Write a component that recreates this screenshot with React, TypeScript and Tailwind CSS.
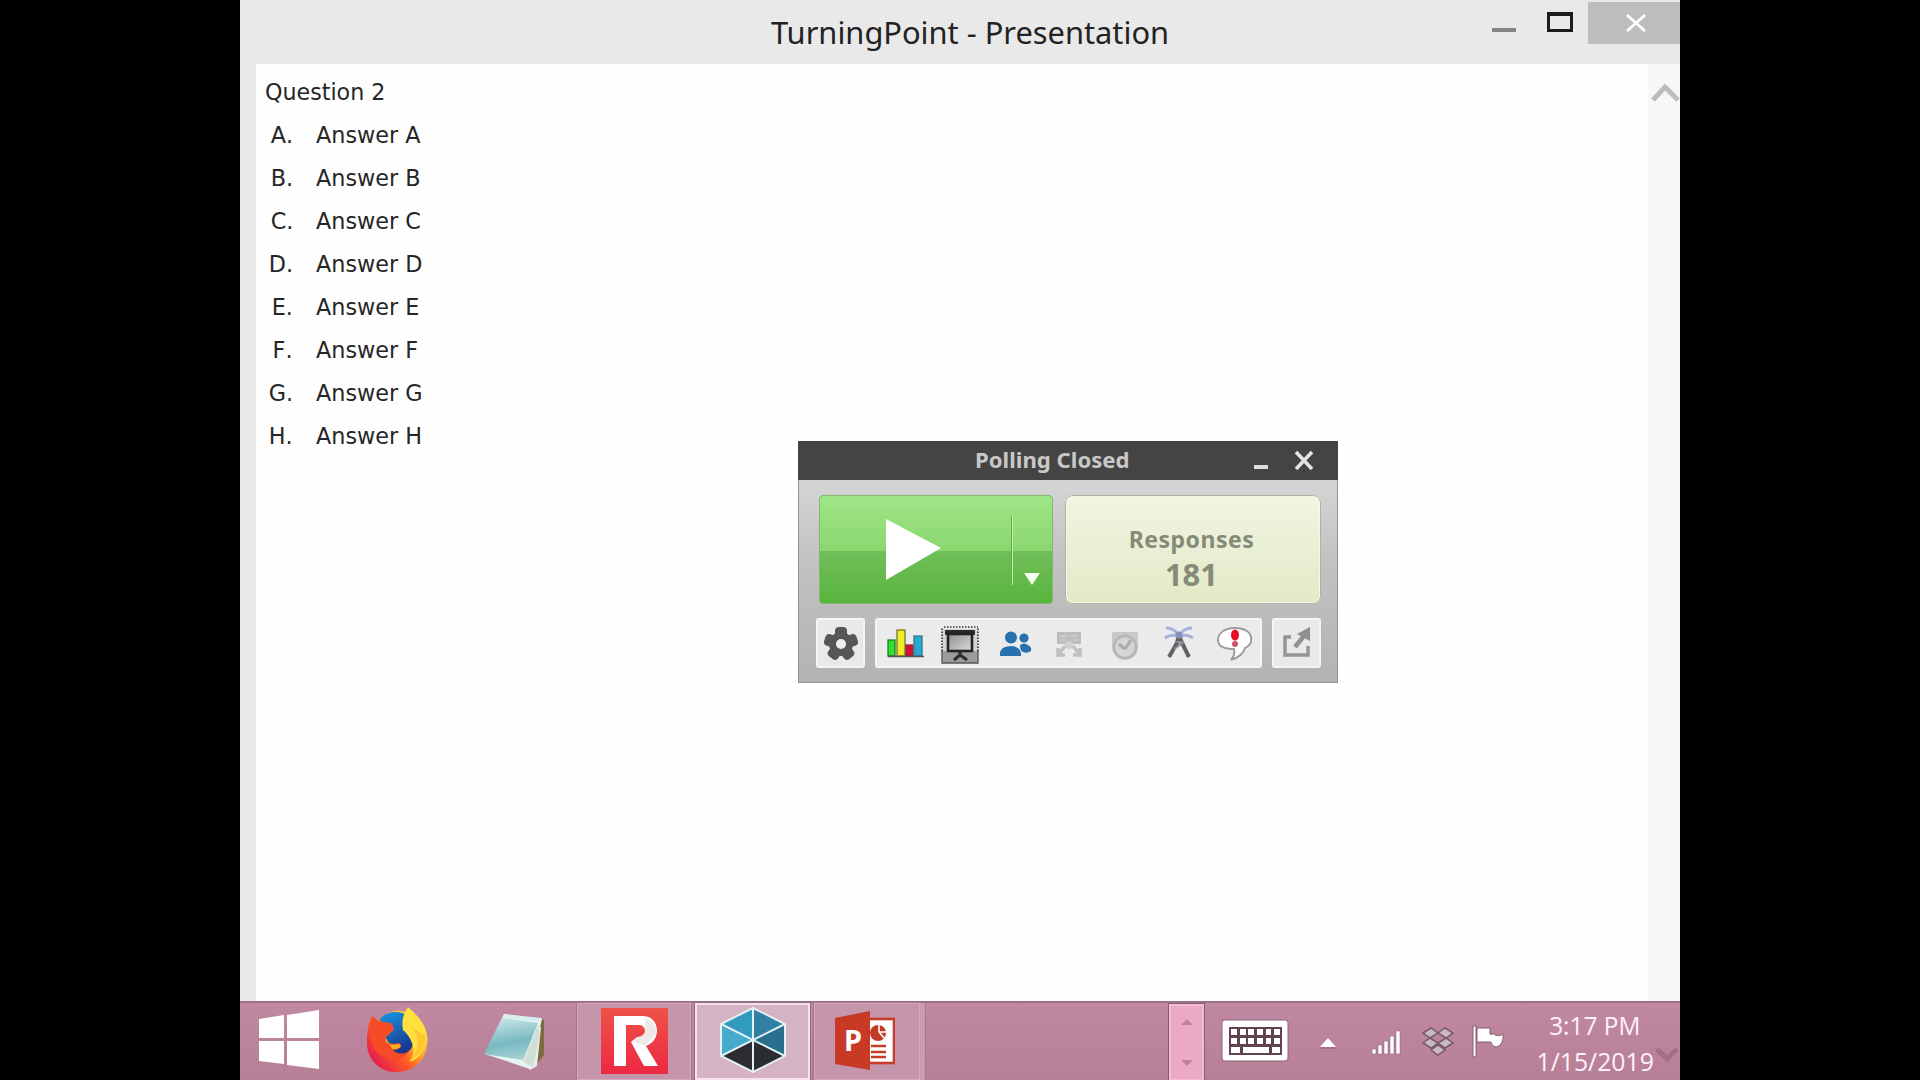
import React from 'react';

const answers = ['A', 'B', 'C', 'D', 'E', 'F', 'G', 'H'];

function TitleBar() {
  return (
    <header className="flex h-16 shrink-0 items-start bg-[#e9e9e9]">
      <h1 className="ml-[531px] mt-[12px] w-[721px] shrink-0 whitespace-nowrap font-['Noto_Sans'] text-[30px] leading-[42px] text-[#222]">
        <span className="inline-block origin-left scale-x-[1.027]">TurningPoint - Presentation</span>
      </h1>
      <div className="mr-[31px] mt-[28px] h-1 w-6 shrink-0 bg-[#858585]" />
      <div className="mr-[15px] mt-[12px] h-5 w-[26px] shrink-0 border-[3px] border-t-4 border-[#1b1b1b]" />
      <div className="mt-[2px] flex h-[42px] w-[92px] shrink-0 items-center bg-[#bdbdbd] pl-[38px]">
        <svg width="20" height="18" viewBox="0 0 20 18">
          <path d="M1 1L19 17M19 1L1 17" stroke="#fff" strokeWidth="2.8" />
        </svg>
      </div>
    </header>
  );
}

function Slide() {
  return (
    <main className="flex h-[937px] shrink-0">
      <div className="w-4 bg-[#e8e8e8]" />
      <section className="flex-1 bg-[#fefefe] pt-[7px] font-['DejaVu_Sans'] text-[23px] text-[#262626] [font-kerning:none]">
        <h2 className="ml-[9px] h-[43px] leading-[43px]">
          <span className="inline-block origin-left scale-x-[0.965]">Question 2</span>
        </h2>
        <ol>
          {answers.map((a) => (
            <li key={a} className="flex h-[43px] leading-[43px]">
              <span className="w-[37px] text-right">
                <span className="inline-block origin-right scale-x-[0.97]">{a}.</span>
              </span>
              <span className="ml-[23px] inline-block origin-left scale-x-[0.97]">Answer {a}</span>
            </li>
          ))}
        </ol>
      </section>
      <aside className="w-8 bg-[#f7f7f7] pl-[3px] pt-[18px]">
        <svg width="29" height="22" viewBox="0 0 29 22">
          <path d="M2 18L14 5L27 18" fill="none" stroke="#bcbcbc" strokeWidth="5" />
        </svg>
      </aside>
    </main>
  );
}

function GearIcon() {
  return (
    <svg width="34" height="34" viewBox="0 0 34 34">
      <g fill="#565656">
        <circle cx="17" cy="18" r="12" />
        <rect x="11" y="1" width="12" height="10" rx="4" />
        <rect x="11" y="1" width="12" height="10" rx="4" transform="rotate(72 17 18)" />
        <rect x="11" y="1" width="12" height="10" rx="4" transform="rotate(144 17 18)" />
        <rect x="11" y="1" width="12" height="10" rx="4" transform="rotate(216 17 18)" />
        <rect x="11" y="1" width="12" height="10" rx="4" transform="rotate(288 17 18)" />
      </g>
      <circle cx="17" cy="18" r="5" fill="#eee" />
    </svg>
  );
}

function ChartIcon() {
  return (
    <svg width="38" height="30" viewBox="0 0 38 30">
      <g strokeWidth="1.3">
        <rect x="1" y="12" width="7" height="16" fill="#2ee12e" stroke="#247a24" />
        <rect x="10" y="2" width="8" height="26" fill="#f0ec25" stroke="#77782c" />
        <rect x="19" y="17" width="7" height="11" fill="#d60f37" stroke="#96233c" />
        <rect x="27" y="8" width="8" height="20" fill="#24abd6" stroke="#3d7683" />
      </g>
      <path d="M1 28.5H37" stroke="#555" strokeWidth="1.5" />
    </svg>
  );
}

function ScreenIcon() {
  return (
    <svg width="40" height="40" viewBox="0 0 40 40">
      <defs>
        <linearGradient id="screen" x1="0" y1="0" x2="1" y2="1">
          <stop stopColor="#8f8f8f" />
          <stop offset="1" stopColor="#ddd" />
        </linearGradient>
      </defs>
      <rect x="2" y="4" width="36" height="34" fill="#d4d4d4" />
      <rect x="2" y="26" width="36" height="12" fill="#9b9b9b" />
      <path d="M2 26V3M38 26V3M4 2H38" fill="none" stroke="#333" strokeWidth="1.6" strokeDasharray="1.5 1.5" />
      <path d="M2 26V38H38V26" fill="none" stroke="#555" strokeWidth="1.3" />
      <rect x="5" y="5" width="30" height="5" rx="1" fill="#292929" />
      <rect x="8" y="9" width="24" height="17" fill="url(#screen)" stroke="#222" strokeWidth="2.6" />
      <path d="M20 26V31M14 35L20 30L27 35" fill="none" stroke="#2b2b2b" strokeWidth="3" />
    </svg>
  );
}

function PeopleIcon() {
  return (
    <svg width="32" height="27" viewBox="0 0 32 27" fill="#2870ae">
      <circle cx="24" cy="7" r="4.6" />
      <path d="M20 14Q24 11 28 14Q32 16 31 20Q27 23 23 21Q20 20 20 14Z" />
      <circle cx="11" cy="6.5" r="6" />
      <path d="M0 25V21Q2 15 11 15Q19 15 21 22V25Z" />
    </svg>
  );
}

function ShuffleIcon() {
  return (
    <svg width="26" height="26" viewBox="0 0 26 26">
      <rect x="1" y="1" width="24" height="12" fill="#bdbdbd" />
      <path d="M4 5H11M15 5H22M4 9H9M17 9H22" stroke="#d0d0d0" strokeWidth="1.6" />
      <circle cx="13" cy="14" r="4" fill="#d2d2d2" />
      <path d="M2 24L9 15M24 24L17 15M2 17V24H9M24 17V24H17" fill="none" stroke="#bfbfbf" strokeWidth="3.4" />
    </svg>
  );
}

function ClockIcon() {
  return (
    <svg width="28" height="30" viewBox="0 0 28 30">
      <path d="M1 1H27V16A13 13 0 0 1 1 16Z" fill="#c9c9c9" />
      <circle cx="14" cy="16" r="11" fill="#d5d5d5" stroke="#b5b5b5" strokeWidth="2.4" />
      <path d="M14 18L20 9M14 18L8 13" stroke="#ababab" strokeWidth="3" />
    </svg>
  );
}

function AntennaIcon() {
  return (
    <svg width="30" height="34" viewBox="0 0 30 34" fill="none">
      <path d="M2 3Q9 3 13 8M28 3Q21 3 17 8M1 13Q7 9 13 11M29 13Q23 9 17 11" stroke="#a9b0dc" strokeWidth="3" />
      <path d="M15 10L13 18L5 32M15 10L18 18L25 32" stroke="#5e6063" strokeWidth="4" />
      <path d="M10 24L20 17M12 17H19" stroke="#898c94" strokeWidth="2" />
      <circle cx="15" cy="10" r="3.5" fill="#8790b6" />
    </svg>
  );
}

function AlertIcon() {
  return (
    <svg width="36" height="36" viewBox="0 0 36 36">
      <path
        d="M18 2C8 2 1 7 1 14C1 20 6 23 17 23C18 28 17 31 14 34C23 31 27 26 28 22C32 20 35 17 34 12C34 6 27 2 18 2Z"
        fill="#fff"
        stroke="#999"
        strokeWidth="1.8"
      />
      <ellipse cx="18" cy="9" rx="4" ry="5.5" fill="#e90c25" />
      <circle cx="18" cy="18" r="3" fill="#cb5369" />
    </svg>
  );
}

function ExportIcon() {
  return (
    <svg width="30" height="32" viewBox="0 0 30 32">
      <path d="M9 11H3V29H26V20" fill="none" stroke="#949494" strokeWidth="3.4" />
      <path d="M13 21L22 10" stroke="#909090" strokeWidth="4.5" />
      <path d="M15 8L28 1V15Z" fill="#909090" />
    </svg>
  );
}

function PollingWindow() {
  return (
    <div className="absolute left-[798px] top-[441px] flex h-[242px] w-[540px] flex-col border border-[#929292] bg-gradient-to-b from-[#dedede] via-[#c2c2c2] to-[#b3b3b3]">
      <div className="-mx-px -mt-px flex h-[39px] shrink-0 items-start bg-[#444]">
        <div className="ml-[177px] mt-[1px] w-[160px] whitespace-nowrap font-['Noto_Sans'] text-[21.5px] font-bold leading-9 text-[#c8c8c8]">
          <span className="inline-block origin-left scale-x-[1.03]">Polling Closed</span>
        </div>
        <div className="ml-[119px] mt-6 h-[4px] w-[14px] bg-[#ddd]" />
        <svg className="ml-[26px] mt-[10px]" width="20" height="19" viewBox="0 0 20 19">
          <path d="M2 1L18 18M18 1L2 18" stroke="#e4e4e4" strokeWidth="3.6" />
        </svg>
      </div>
      <div className="mt-[15px] flex h-[109px] gap-[12px] pl-[20px]">
        <div className="flex w-[234px] flex-col overflow-hidden rounded-[4px] border border-[#83b96f] bg-[linear-gradient(#9fe587_0%,#8bd76f_51%,#70be59_52%,#58b43c_100%)]">
          <div className="flex h-full">
            <svg className="ml-[66px] mt-[22px] shrink-0" width="57" height="64" viewBox="0 0 57 64">
              <path d="M0 1L55 30L0 62Z" fill="#fff" />
            </svg>
            <div className="ml-[68px] mt-5 h-[69px] w-[2px] shrink-0 border-l border-[#5eae47] bg-[#c4efb4]" />
            <svg className="ml-[11px] mt-[77px] shrink-0" width="17" height="14" viewBox="0 0 17 14">
              <path d="M0 0H16L8 12Z" fill="#f1ffec" />
            </svg>
          </div>
        </div>
        <div className="flex w-[256px] flex-col items-center rounded-[8px] border-2 border-[#f5f8e9] bg-gradient-to-b from-[#f1f5e2] to-[#e2eac6] pr-[3px] pt-[25px] font-['Noto_Sans'] font-bold text-[#858a79] outline outline-1 -outline-offset-1 outline-[#afb3a0]">
          <div className="text-[23px] leading-[34px] tracking-[0.5px]">Responses</div>
          <div className="text-[31px] leading-[37px]">181</div>
        </div>
      </div>
      <div className="mt-[14px] flex h-[50px] pl-[17px]">
        <div className="flex w-[49px] items-center justify-center rounded-[3px] border-2 border-[#f5f5f5] bg-[#e9e9e9]">
          <GearIcon />
        </div>
        <div className="ml-[10px] flex w-[387px] items-start rounded-[3px] border-2 border-[#f5f5f5] bg-[#ebebeb]">
          <div className="ml-[10px] mt-[8px]"><ChartIcon /></div>
          <div className="ml-[15px] mt-[5px]"><ScreenIcon /></div>
          <div className="ml-[20px] mt-[11px]"><PeopleIcon /></div>
          <div className="ml-[24px] mt-[11px]"><ShuffleIcon /></div>
          <div className="ml-[29px] mt-[11px]"><ClockIcon /></div>
          <div className="ml-[25px] mt-[5px]"><AntennaIcon /></div>
          <div className="ml-[23px] mt-[6px]"><AlertIcon /></div>
        </div>
        <div className="ml-[10px] flex w-[49px] items-start justify-center rounded-[3px] border-2 border-[#f5f5f5] bg-[#e9e9e9] pt-[6px]">
          <ExportIcon />
        </div>
      </div>
    </div>
  );
}

function WindowsLogo() {
  return (
    <svg width="62" height="62" viewBox="0 0 62 62" fill="#fff">
      <path d="M1 10L26 6V29H1ZM29 6L61 1V29H29ZM1 32H26V55L1 52ZM29 32H61V60L29 56Z" />
    </svg>
  );
}

function FirefoxIcon() {
  return (
    <svg width="62" height="66" viewBox="0 0 62 66">
      <defs>
        <linearGradient id="fox" x1="0.95" y1="0.15" x2="0.15" y2="0.85">
          <stop stopColor="#fff04a" />
          <stop offset="0.35" stopColor="#ffb526" />
          <stop offset="0.65" stopColor="#ff5a25" />
          <stop offset="1" stopColor="#e5214b" />
        </linearGradient>
        <linearGradient id="globe" x1="0" y1="0" x2="0.4" y2="1">
          <stop stopColor="#159ae5" />
          <stop offset="1" stopColor="#1b368c" />
        </linearGradient>
      </defs>
      <path d="M6 9L11 15C21 2 34 2 42 6V1C54 9 64 24 61 38C59 55 46 65 30 65C13 65 1 52 1 36C1 25 2 18 6 9Z" fill="url(#fox)" />
      <path d="M14 12C20 4 34 3 40 8L48 24C51 40 41 49 32 48C25 48 20 43 20 36L17 22Z" fill="url(#globe)" />
      <path d="M7 9L13 15C19 14 24 17 26 16L28 23L20 30C18 35 25 38 33 36C37 38 34 43 27 43C30 47 38 48 43 44C36 58 12 54 6 37C3 28 3 17 7 9Z" fill="#f64b27" />
      <path d="M20 31C17 36 25 39 33 37C37 39 34 43 26 42Z" fill="#ffad25" />
      <path d="M42 0C49 6 60 18 60 32C59 43 53 52 44 55C51 43 46 31 37 23C35 13 38 6 42 0Z" fill="#ffe03c" />
      <path d="M45 20C56 32 52 45 43 54C54 49 60 40 59 29Z" fill="#ffc52f" />
    </svg>
  );
}

function NotepadIcon() {
  return (
    <svg width="62" height="62" viewBox="0 0 62 62">
      <defs>
        <linearGradient id="note" x1="0.3" y1="0" x2="0.5" y2="1">
          <stop stopColor="#c7e5e7" />
          <stop offset="0.6" stopColor="#79b9c1" />
          <stop offset="1" stopColor="#a4d0d3" />
        </linearGradient>
      </defs>
      <path d="M56 8L60 10V45L49 59Z" fill="#7d6a3f" />
      <path d="M55 15L57 18L53 56L46 60L36 49Z" fill="#e4efea" />
      <path d="M20 4L58 9L46 59L1 44Z" fill="#e5f3f2" />
      <path d="M18 8L54 13L39 50L0 44Z" fill="url(#note)" />
      <path d="M20 4L58 8L57 12L19 8Z" fill="#d8eeee" />
      <path d="M54 15L39 52L49 57L56 24Z" fill="#d2dfd6" />
    </svg>
  );
}

function RIcon() {
  return (
    <svg width="67" height="66" viewBox="0 0 67 66">
      <defs>
        <linearGradient id="red" x1="0" y1="0" x2="0" y2="1">
          <stop stopColor="#ef5147" />
          <stop offset="1" stopColor="#ed2943" />
        </linearGradient>
      </defs>
      <rect width="67" height="66" fill="url(#red)" />
      <path d="M13 58V8H42C50 8 56 14 56 23C56 30 51 36 45 38L57 58H43L30 34L36 29C41 29 44 27 44 23C44 20 42 17 38 17H25V58Z" fill="#fff" />
      <path d="M44 10Q56 15 55 26L44 38L31 33L37 29Q45 28 44 20Z" fill="#eee8e8" />
    </svg>
  );
}

function CubeIcon() {
  return (
    <svg width="66" height="66" viewBox="0 0 66 66">
      <path d="M33 1L65 17V49L33 65L1 49V17Z" fill="#2c2d32" />
      <path d="M33 2V33L2 17Z" fill="#3299bf" />
      <path d="M33 2V33L64 17Z" fill="#317fa2" />
      <path d="M2 17L33 33L2 49Z" fill="#45aacd" />
      <path d="M64 17L33 33L64 49Z" fill="#286e8d" />
      <path d="M33 1L65 17V49L33 65L1 49V17ZM33 1V65M1 17L65 49M65 17L1 49" fill="none" stroke="#e6f1f5" strokeWidth="2" />
    </svg>
  );
}

function PowerPointIcon() {
  return (
    <svg width="60" height="60" viewBox="0 0 60 60">
      <rect x="31" y="8" width="28" height="44" fill="#fff" stroke="#c63c28" strokeWidth="2.6" />
      <circle cx="43" cy="22" r="8" fill="#c13b29" />
      <path d="M44 21V13M44 21H52M44 21L49 27" stroke="#fff" strokeWidth="1.6" />
      <path d="M36 35H51M36 41H51M36 46H51" stroke="#c63c28" strokeWidth="2.3" />
      <path d="M0 7L35 0V59L0 53Z" fill="#c83a26" />
      <text x="9" y="40" fontFamily="Noto Sans" fontWeight="700" fontSize="29" fill="#fff">P</text>
    </svg>
  );
}

function Tray() {
  return (
    <div className="flex items-start">
      <div className="mt-px flex h-[77px] w-[35px] flex-col items-center justify-between border-2 border-[#f3bdd0] bg-[#eca9c3] py-[13px] outline outline-1 outline-[#865c70]">
        <svg width="12" height="6" viewBox="0 0 12 6"><path d="M0 6L6 0L12 6Z" fill="#bd819b" /></svg>
        <svg width="12" height="6" viewBox="0 0 12 6"><path d="M0 0L6 6L12 0Z" fill="#bd819b" /></svg>
      </div>
      <svg className="ml-[17px] mt-[16px]" width="68" height="44" viewBox="0 0 68 44">
        <rect x="1" y="1" width="66" height="41" rx="3" fill="#fff" stroke="#8e6779" />
        <rect x="8" y="8" width="53" height="28" fill="#634252" />
        <g fill="#fff">
          <path d="M10 10h6v6h-6zM19 10h6v6h-6zM27 10h6v6h-6zM36 10h6v6h-6zM45 10h5v6h-5zM53 10h6v6h-6z" />
          <path d="M10 19h6v6h-6zM19 19h6v6h-6zM27 19h6v6h-6zM36 19h6v6h-6zM45 19h5v6h-5zM53 19h6v6h-6z" />
          <path d="M10 28h9v6h-9zM22 28h26v6h-26zM51 28h8v6h-8z" />
        </g>
      </svg>
      <svg className="ml-[31px] mt-[35px]" width="16" height="11" viewBox="0 0 16 11">
        <path d="M0 9L8 0L16 9Z" fill="#fff" />
        <path d="M0 10H16" stroke="#89637a" />
      </svg>
      <svg className="ml-[35px] mt-[27px]" width="30" height="25" viewBox="0 0 30 25">
        <g fill="#fff" stroke="#805a6c" strokeWidth="0.5">
          <path d="M1 19h4v5h-4zM7 15h4v9h-4zM13 11h4v13h-4zM19 6h4v18h-4zM25 1h4v23h-4z" />
        </g>
      </svg>
      <svg className="ml-[21px] mt-[24px]" width="32" height="30" viewBox="0 0 32 30">
        <g fill="#cbb9c1" stroke="#755b68" strokeWidth="1.5">
          <path d="M1 6L9 1L16 6L8 11ZM16 6L23 1L31 6L24 11ZM1 16L8 11L16 16L9 21ZM16 16L24 11L31 16L23 21ZM9 23L16 18L23 23L16 28Z" />
        </g>
      </svg>
      <svg className="ml-[18px] mt-[22px]" width="34" height="33" viewBox="0 0 34 33">
        <path d="M5 3H18V9Q20 11 21 8Q25 13 31 9Q32 19 25 22Q20 22 19 17H5Z" fill="#fff" stroke="#815e6e" />
        <path d="M1 1H4V32H1Z" fill="#fff" stroke="#805c6d" />
      </svg>
      <div className="ml-[30px] mt-[4px] flex h-[73px] w-[118px] flex-col items-center whitespace-nowrap font-['Open_Sans'] text-[25px] leading-[36px] text-[#fff2f7]">
        <span className="inline-block scale-x-[0.975]">3:17 PM</span>
        <span className="inline-block scale-x-[0.99]">1/15/2019</span>
      </div>
      <svg className="mt-[43px]" width="26" height="18" viewBox="0 0 26 18">
        <path d="M3 3L13 13L23 3" fill="none" stroke="#a66d89" strokeWidth="5" />
      </svg>
    </div>
  );
}

function Taskbar() {
  return (
    <footer className="flex h-[79px] shrink-0 items-start justify-between border-t-2 border-[#9e7085] bg-gradient-to-b from-[#c088a1] to-[#b78097]">
      <div className="flex items-start">
        <div className="ml-[18px] mt-[6px]"><WindowsLogo /></div>
        <div className="ml-[46px] mt-[4px]"><FirefoxIcon /></div>
        <div className="ml-[56px] mt-[7px]"><NotepadIcon /></div>
        <div className="ml-[31px] flex h-[77px] w-[114px] justify-center border border-[#d3aabd] bg-[#c495ab] pt-[4px] outline outline-1 outline-[#a8758d]"><RIcon /></div>
        <div className="ml-[4px] flex h-[77px] w-[115px] justify-center border-2 border-[#f5e2ea] bg-[#d6b3c2] pt-[2px] outline outline-1 outline-[#946b7e]"><CubeIcon /></div>
        <div className="ml-[4px] flex h-[77px] w-[106px] border border-[#d3aabd] bg-[#c495ab] pl-[20px] pt-[7px] outline outline-1 outline-[#a8758d]"><PowerPointIcon /></div>
        <div className="h-[77px] w-[6px] border-r border-[#a8758d] bg-[#c99bb0]" />
      </div>
      <Tray />
    </footer>
  );
}

export default function App() {
  return (
    <div className="relative flex h-[1080px] w-[1920px] justify-center overflow-hidden bg-black">
      <div className="flex h-full w-[1440px] flex-col overflow-hidden">
        <TitleBar />
        <Slide />
        <Taskbar />
      </div>
      <PollingWindow />
    </div>
  );
}
